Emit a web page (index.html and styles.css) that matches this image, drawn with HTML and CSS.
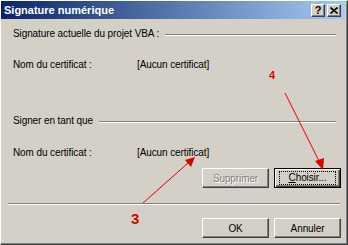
FILE: index.html
```html
<!DOCTYPE html>
<html lang="fr">

<head>
    <meta charset="UTF-8">
    <title>Signature numérique</title>
    <link rel="stylesheet" href="styles.css">
</head>

<body>
    <div class="window">
        <div class="titlebar">
            <span class="title">Signature numérique</span>
            <div class="caption-btns">
                <span class="cbtn">?</span>
                <span class="cbtn">
                    <svg width="8" height="7" viewBox="0 0 8 7">
                        <path d="M0.5 0.5 L7.5 6.5 M7.5 0.5 L0.5 6.5" stroke="#000" stroke-width="1.6" />
                    </svg>
                </span>
            </div>
        </div>

        <div class="content">
            <div class="section-head first">
                <span>Signature actuelle du projet VBA :</span>
                <span class="groove"></span>
            </div>
            <div class="field">
                <span class="label">Nom du certificat :</span>
                <span class="value">[Aucun certificat]</span>
            </div>

            <div class="section-head second">
                <span>Signer en tant que</span>
                <span class="groove"></span>
            </div>
            <div class="field field-sign">
                <span class="label">Nom du certificat :</span>
                <span class="value">[Aucun certificat]</span>
            </div>

            <div class="btn-row">
                <button class="btn" disabled>Supprimer</button>
                <button class="btn btn-default"><span class="focus"><u>C</u>hoisir...</span></button>
            </div>

            <div class="separator"></div>

            <div class="btn-row btn-row-bottom">
                <button class="btn">OK</button>
                <button class="btn">Annuler</button>
            </div>
        </div>

        <!-- annotations dessinées par-dessus la capture -->
        <svg class="annotations" width="348" height="245" viewBox="0 0 348 245">
            <g stroke="#e00000" stroke-width="1" fill="#e00000">
                <line x1="285" y1="93" x2="319" y2="161" />
                <polygon points="323,170 315,161 324,158" stroke="none" />
                <line x1="143" y1="203" x2="188" y2="163" />
                <polygon points="195,157 185,160 191,167" stroke="none" />
            </g>
            <text x="269" y="79" class="num num-4">4</text>
            <text x="131" y="224" class="num num-3">3</text>
        </svg>
    </div>
</body>

</html>
```

FILE: styles.css
```css
/* Reset CSS */
* {
    margin: 0;
    padding: 0;
    box-sizing: border-box;
}

body {
    font-family: 'Liberation Sans', Arial, sans-serif;
    font-size: 10px;
    letter-spacing: -0.1px;
    color: #000;
    background: #d4d0c8;
}

.window {
    position: relative;
    width: 348px;
    height: 245px;
    background: #d4d0c8;
    border-left: 1px solid #ffffff;
    border-top: 1px solid #ffffff;
    border-right: 1px solid #404040;
    border-bottom: 1px solid #404040;
    box-shadow: inset -1px -1px 0 #808080;
    display: flex;
    flex-direction: column;
}

.titlebar {
    height: 18px;
    margin-right: 2px;
    background: linear-gradient(to right, #0a246a, #a6caf0);
    display: flex;
    align-items: center;
    justify-content: space-between;
    padding-left: 3px;
    padding-right: 4px;
}

.title {
    color: #fff;
    font-weight: bold;
    font-size: 11px;
    letter-spacing: 0;
}

.caption-btns {
    display: flex;
    gap: 2px;
}

.cbtn {
    width: 14px;
    height: 13px;
    background: #d4d0c8;
    border-left: 1px solid #fff;
    border-top: 1px solid #fff;
    border-right: 1px solid #404040;
    border-bottom: 1px solid #404040;
    box-shadow: inset -1px -1px 0 #808080;
    display: flex;
    align-items: center;
    justify-content: center;
    font-weight: bold;
    font-size: 11px;
    line-height: 11px;
}

.content {
    padding: 8px 0 0 12px;
    display: flex;
    flex-direction: column;
    line-height: 13px;
}

.section-head {
    display: flex;
    align-items: flex-end;
    padding-right: 11px;
    white-space: nowrap;
}

.section-head.second {
    margin-top: 43px;
}

.groove {
    flex: 1;
    height: 2px;
    margin-left: 6px;
    margin-bottom: 4px;
    border-top: 1px solid #808080;
    border-bottom: 1px solid #fff;
}

.field {
    display: flex;
    margin-top: 18px;
}

.field-sign {
    margin-top: 19px;
}

.label {
    width: 124px;
}

.btn-row {
    display: flex;
    justify-content: flex-end;
    gap: 5px;
    margin-top: 9px;
    padding-right: 6px;
}

.btn-row-bottom {
    margin-top: 13px;
}

.btn {
    width: 67px;
    height: 20px;
    font-family: inherit;
    font-size: 10px;
    letter-spacing: -0.1px;
    color: #000;
    background: #d4d0c8;
    border-left: 1px solid #fff;
    border-top: 1px solid #fff;
    border-right: 1px solid #404040;
    border-bottom: 1px solid #404040;
    box-shadow: inset -1px -1px 0 #808080;
    display: flex;
    align-items: center;
    justify-content: center;
}

.btn:disabled {
    color: #808080;
    text-shadow: 1px 1px 0 #fff;
}

.btn-default {
    border: 1px solid #000;
    box-shadow: inset 1px 1px 0 #fff, inset -1px -1px 0 #404040, inset -2px -2px 0 #808080;
}

.focus {
    display: block;
    width: 57px;
    height: 14px;
    line-height: 12px;
    border: 1px dotted #000;
}

.separator {
    height: 2px;
    margin: 15px 7px 0 -5px;
    border-top: 1px solid #808080;
    border-bottom: 1px solid #fff;
}

.annotations {
    position: absolute;
    left: -1px;
    top: -1px;
    pointer-events: none;
}

.num {
    fill: #e00000;
    font-family: 'Liberation Sans', Arial, sans-serif;
    font-weight: bold;
}

.num-4 {
    font-size: 11px;
}

.num-3 {
    font-size: 15px;
}
```
